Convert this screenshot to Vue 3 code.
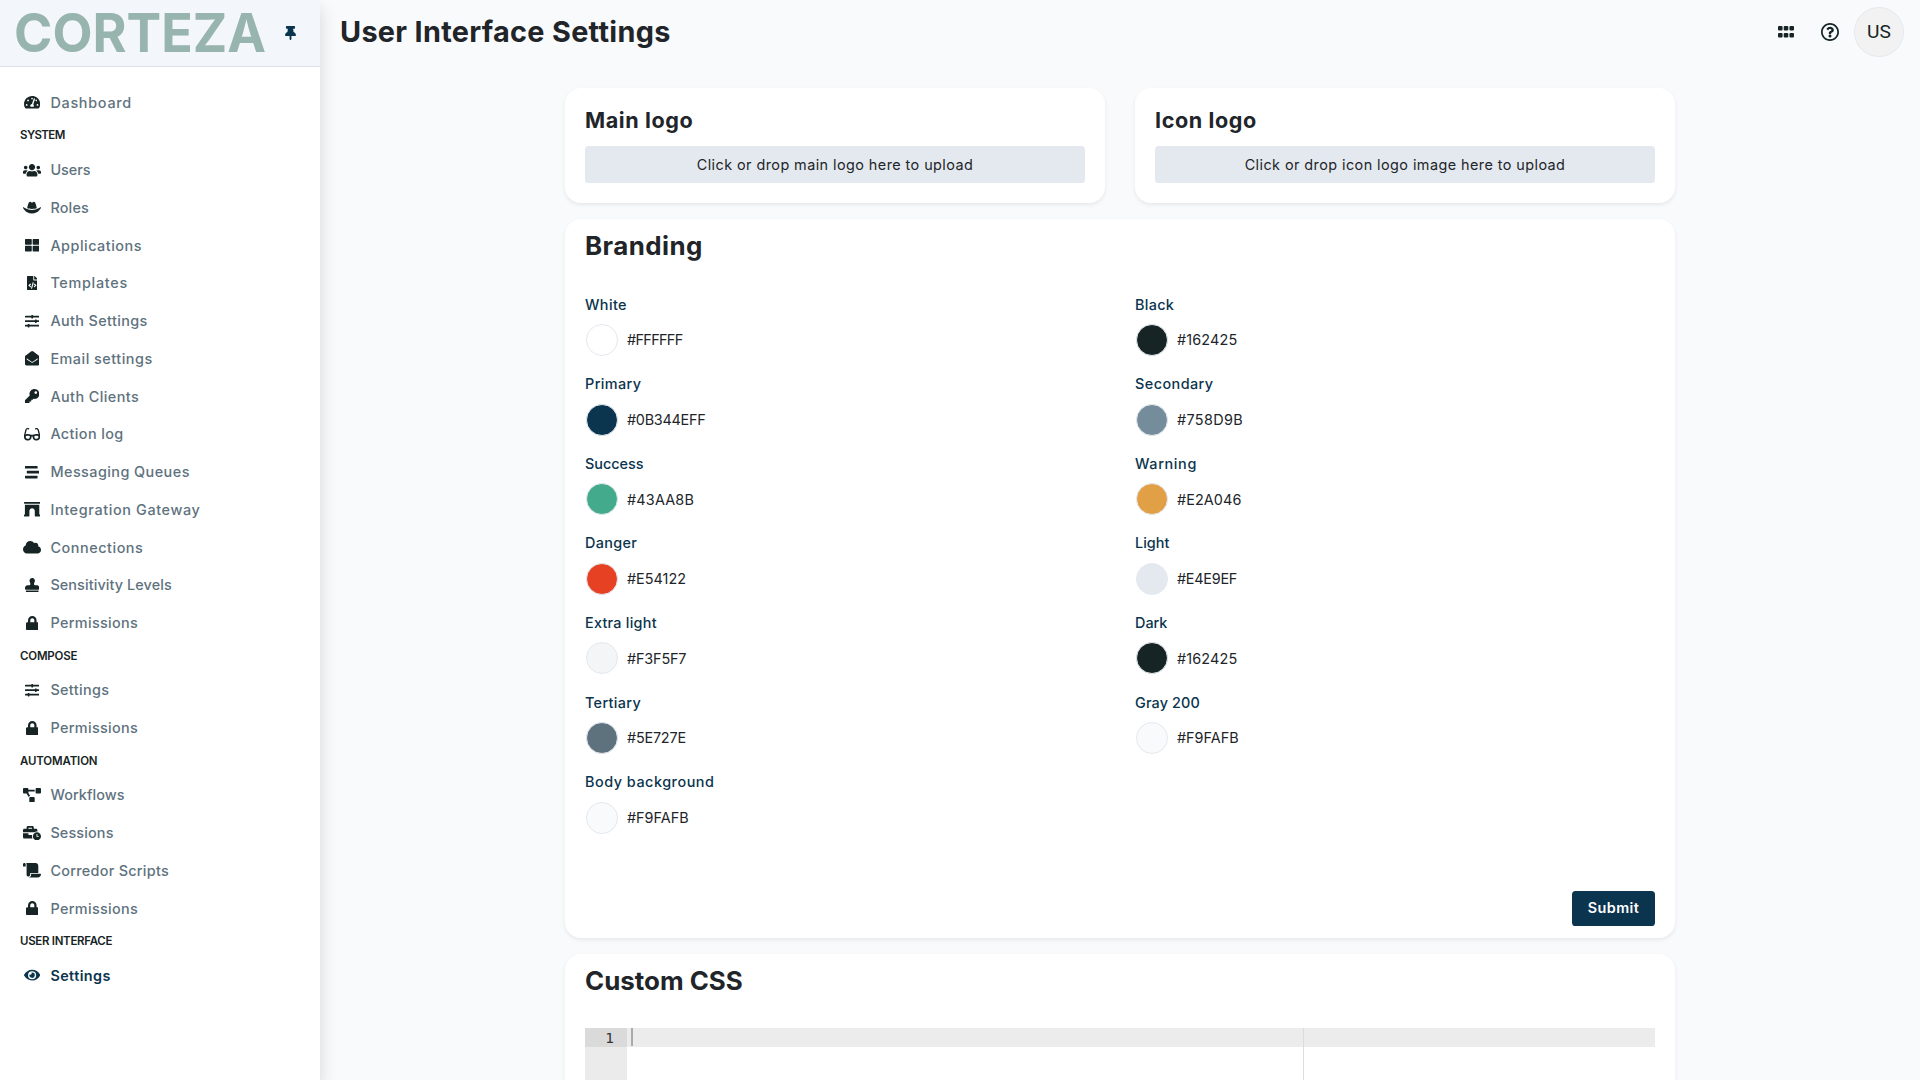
<script setup>
const icons = {
  dashboard: { w: 576, d: 'M288 32C128.94 32 0 160.94 0 320c0 52.8 14.25 102.26 39.06 144.8 5.61 9.62 16.3 15.2 27.44 15.2h443c11.14 0 21.83-5.58 27.44-15.2C561.75 422.26 576 372.8 576 320c0-159.06-128.94-288-288-288zm0 64c14.71 0 26.58 10.13 30.32 23.65-1.11 2.26-2.64 4.23-3.45 6.67l-9.22 27.67c-5.13 3.49-10.97 6.01-17.64 6.01-17.67 0-32-14.33-32-32S270.33 96 288 96zM96 384c-17.67 0-32-14.33-32-32s14.33-32 32-32 32 14.33 32 32-14.33 32-32 32zm48-160c-17.67 0-32-14.33-32-32s14.33-32 32-32 32 14.33 32 32-14.33 32-32 32zm246.77-72.41l-61.33 184C343.13 347.33 352 364.54 352 384c0 11.72-3.38 22.55-8.88 32H232.88c-5.5-9.45-8.88-20.28-8.88-32 0-33.94 26.5-61.43 59.9-63.59l61.34-184.01c4.17-12.56 17.73-19.45 30.36-15.17 12.57 4.19 19.35 17.79 15.17 30.36zm14.66 57.2l15.52-46.55c3.47-1.29 7.13-2.23 11.05-2.23 17.67 0 32 14.33 32 32s-14.33 32-32 32c-11.38-.01-20.89-6.28-26.57-15.22zM480 384c-17.67 0-32-14.33-32-32s14.33-32 32-32 32 14.33 32 32-14.33 32-32 32z' },
  users: { w: 640, d: 'M96 224c35.3 0 64-28.7 64-64s-28.7-64-64-64-64 28.7-64 64 28.7 64 64 64zm448 0c35.3 0 64-28.7 64-64s-28.7-64-64-64-64 28.7-64 64 28.7 64 64 64zm32 32h-64c-17.6 0-33.5 7.1-45.1 18.6 40.3 22.1 68.9 62 75.1 109.4h66c17.7 0 32-14.3 32-32v-32c0-35.3-28.7-64-64-64zm-256 0c61.9 0 112-50.1 112-112S381.9 32 320 32 208 82.1 208 144s50.1 112 112 112zm76.8 32h-8.3c-20.8 10-43.9 16-68.5 16s-47.6-6-68.5-16h-8.3C179.6 288 128 339.6 128 403.2V432c0 26.5 21.5 48 48 48h288c26.5 0 48-21.5 48-48v-28.8c0-63.6-51.6-115.2-115.2-115.2zm-223.7-13.4C161.5 263.1 145.6 256 128 256H64c-35.3 0-64 28.7-64 64v32c0 17.7 14.3 32 32 32h65.9c6.3-47.4 34.9-87.3 75.2-109.4z' },
  hat: { w: 640, d: 'M490 296.9C480.51 239.51 450.51 64 392.3 64c-14 0-26.49 5.93-37 14a58.21 58.21 0 0 1-70.58 0c-10.51-8-23-14-37-14-58.2 0-88.2 175.47-97.71 232.88C188.81 309.47 243.73 320 320 320s131.23-10.51 170-23.1zm142.9-37.18a16 16 0 0 0-19.75 1.5c-1 .9-101.27 90.78-293.16 90.78-190.82 0-292.22-89.94-293.24-90.84A16 16 0 0 0 1 278.53C1.73 280.55 78.32 480 320 480s318.27-199.45 319-201.47a16 16 0 0 0-6.09-18.81z' },
  thLarge: { w: 512, d: 'M296 32h192c13.255 0 24 10.745 24 24v160c0 13.255-10.745 24-24 24H296c-13.255 0-24-10.745-24-24V56c0-13.255 10.745-24 24-24zm-80 0H24C10.745 32 0 42.745 0 56v160c0 13.255 10.745 24 24 24h192c13.255 0 24-10.745 24-24V56c0-13.255-10.745-24-24-24zM0 296v160c0 13.255 10.745 24 24 24h192c13.255 0 24-10.745 24-24V296c0-13.255-10.745-24-24-24H24c-13.255 0-24 10.745-24 24zm296 184h192c13.255 0 24-10.745 24-24V296c0-13.255-10.745-24-24-24H296c-13.255 0-24 10.745-24 24v160c0 13.255 10.745 24 24 24z' },
  fileCode: { w: 384, d: 'M384 121.941V128H256V0h6.059c6.365 0 12.47 2.529 16.971 7.029l97.941 97.941A24.005 24.005 0 0 1 384 121.941zM248 160c-13.2 0-24-10.8-24-24V0H24C10.745 0 0 10.745 0 24v464c0 13.255 10.745 24 24 24h336c13.255 0 24-10.745 24-24V160H248zM123.206 400.505a5.4 5.4 0 0 1-7.633.246l-64.866-60.812a5.4 5.4 0 0 1 0-7.879l64.866-60.812a5.4 5.4 0 0 1 7.633.246l19.579 20.885a5.4 5.4 0 0 1-.372 7.747L101.65 336l40.763 35.874a5.4 5.4 0 0 1 .372 7.747l-19.579 20.884zm51.295 50.479l-27.453-7.97a5.402 5.402 0 0 1-3.681-6.692l61.44-211.626a5.402 5.402 0 0 1 6.692-3.681l27.452 7.97a5.4 5.4 0 0 1 3.68 6.692l-61.44 211.626a5.397 5.397 0 0 1-6.69 3.681zm160.792-111.045l-64.866 60.812a5.4 5.4 0 0 1-7.633-.246l-19.58-20.885a5.4 5.4 0 0 1 .372-7.747L284.35 336l-40.763-35.874a5.4 5.4 0 0 1-.372-7.747l19.58-20.885a5.4 5.4 0 0 1 7.633-.246l64.866 60.812a5.4 5.4 0 0 1-.001 7.879z' },
  sliders: { w: 512, d: 'M496 384H160v-16c0-8.8-7.2-16-16-16h-32c-8.8 0-16 7.2-16 16v16H16c-8.8 0-16 7.2-16 16v32c0 8.8 7.2 16 16 16h80v16c0 8.8 7.2 16 16 16h32c8.8 0 16-7.2 16-16v-16h336c8.8 0 16-7.2 16-16v-32c0-8.8-7.2-16-16-16zm0-160h-80v-16c0-8.8-7.2-16-16-16h-32c-8.8 0-16 7.2-16 16v16H16c-8.8 0-16 7.2-16 16v32c0 8.8 7.2 16 16 16h336v16c0 8.8 7.2 16 16 16h32c8.8 0 16-7.2 16-16v-16h80c8.8 0 16-7.2 16-16v-32c0-8.8-7.2-16-16-16zm0-160H288V48c0-8.8-7.2-16-16-16h-32c-8.8 0-16 7.2-16 16v16H16C7.2 64 0 71.2 0 80v32c0 8.8 7.2 16 16 16h208v16c0 8.8 7.2 16 16 16h32c8.8 0 16-7.2 16-16v-16h208c8.8 0 16-7.2 16-16V80c0-8.8-7.2-16-16-16z' },
  envelope: { w: 512, d: 'M512 464c0 26.51-21.49 48-48 48H48c-26.51 0-48-21.49-48-48V200.724a48 48 0 0 1 18.387-37.776c24.913-19.529 45.501-35.365 164.2-121.511C199.412 29.17 232.797-.347 256 .003c23.198-.354 56.596 29.172 73.413 41.433 118.687 86.137 139.303 101.995 164.2 121.512A48 48 0 0 1 512 200.724V464zm-65.666-196.605c-2.563-3.728-7.7-4.595-11.339-1.907-22.845 16.873-55.462 40.705-105.582 77.079-16.825 12.266-50.21 41.781-73.413 41.43-23.211.344-56.559-29.143-73.413-41.43-50.114-36.37-82.734-60.204-105.582-77.079-3.639-2.688-8.776-1.821-11.339 1.907l-9.072 13.196a7.998 7.998 0 0 0 1.839 10.967c22.887 16.899 55.454 40.69 105.303 76.868 20.274 14.781 56.524 47.813 92.264 47.573 35.724.242 71.961-32.771 92.263-47.573 49.85-36.179 82.418-59.97 105.303-76.868a7.998 7.998 0 0 0 1.839-10.967l-9.071-13.196z' },
  key: { w: 512, d: 'M512 176.001C512 273.203 433.202 352 336 352c-11.22 0-22.19-1.062-32.827-3.069l-24.012 27.014A23.999 23.999 0 0 1 261.223 384H224v40c0 13.255-10.745 24-24 24h-40v40c0 13.255-10.745 24-24 24H24c-13.255 0-24-10.745-24-24v-78.059c0-6.365 2.529-12.47 7.029-16.971l161.802-161.802C163.108 213.814 160 195.271 160 176 160 78.798 238.797.001 335.999 0 433.488-.001 512 78.511 512 176.001zM336 128c0 26.51 21.49 48 48 48s48-21.49 48-48-21.49-48-48-48-48 21.49-48 48z' },
  glasses: { w: 576, d: 'M574.1 280.37L528.75 98.66c-5.91-23.7-21.59-44.05-43-55.81-21.44-11.73-46.97-14.11-70.19-6.33l-15.25 5.08c-8.39 2.79-12.92 11.86-10.12 20.24l5.06 15.18c2.79 8.38 11.85 12.91 20.23 10.12l13.18-4.39c10.87-3.62 23-3.57 33.16 1.73 10.29 5.37 17.57 14.56 20.37 25.82l38.46 153.82c-22.19-6.81-49.79-12.46-81.2-12.46-34.77 0-73.98 7.02-114.85 26.74h-73.18c-40.87-19.74-80.08-26.75-114.86-26.75-31.42 0-59.02 5.65-81.21 12.46l38.46-153.83c2.79-11.25 10.09-20.45 20.38-25.81 10.16-5.3 22.28-5.35 33.15-1.73l13.17 4.39c8.38 2.79 17.44-1.74 20.23-10.12l5.06-15.18c2.8-8.38-1.73-17.45-10.12-20.24l-15.25-5.08c-23.22-7.78-48.75-5.41-70.19 6.33-21.41 11.77-37.09 32.11-43 55.8L1.9 280.37A64.218 64.218 0 0 0 0 295.86v70.25C0 429.01 51.58 480 115.2 480h37.12c60.28 0 110.37-45.94 114.88-105.37l2.93-38.63h35.75l2.93 38.63C313.31 434.06 363.4 480 423.68 480h37.12c63.62 0 115.2-50.99 115.2-113.88v-70.25c0-5.23-.64-10.43-1.9-15.5zm-370.72 89.42c-1.97 25.91-24.4 46.21-51.06 46.21H115.2C86.97 416 64 393.62 64 366.11v-37.54c18.12-6.49 43.42-12.92 72.58-12.92 23.86 0 47.26 4.33 69.93 12.92l-3.13 41.22zM512 366.12c0 27.51-22.97 49.88-51.2 49.88h-37.12c-26.67 0-49.1-20.3-51.06-46.21l-3.13-41.22c22.67-8.59 46.08-12.92 69.95-12.92 29.12 0 54.43 6.44 72.56 12.93v37.54z' },
  stream: { w: 512, d: 'M16 128h416c8.84 0 16-7.16 16-16V48c0-8.84-7.16-16-16-16H16C7.16 32 0 39.16 0 48v64c0 8.84 7.16 16 16 16zm480 80H80c-8.84 0-16 7.16-16 16v64c0 8.84 7.16 16 16 16h416c8.84 0 16-7.16 16-16v-64c0-8.84-7.16-16-16-16zm-64 176H16c-8.84 0-16 7.16-16 16v64c0 8.84 7.16 16 16 16h416c8.84 0 16-7.16 16-16v-64c0-8.84-7.16-16-16-16z' },
  archway: { w: 576, d: 'M560 448h-16V96H32v352H16.02c-8.84 0-16 7.16-16 16v32c0 8.84 7.16 16 16 16H176c8.84 0 16-7.16 16-16V320c0-53.02 42.98-96 96-96s96 42.98 96 96l.02 160v16c0 8.84 7.16 16 16 16H560c8.84 0 16-7.16 16-16v-32c0-8.84-7.16-16-16-16zm0-448H16C7.16 0 0 7.16 0 16v32c0 8.84 7.16 16 16 16h544c8.84 0 16-7.16 16-16V16c0-8.84-7.16-16-16-16z' },
  cloud: { w: 640, d: 'M537.6 226.6c4.1-10.7 6.4-22.4 6.4-34.6 0-53-43-96-96-96-19.7 0-38.1 6-53.3 16.2C367 64.2 315.3 32 256 32c-88.4 0-160 71.6-160 160 0 2.7.1 5.4.2 8.1C40.2 219.8 0 273.2 0 336c0 79.5 64.5 144 144 144h368c70.7 0 128-57.3 128-128 0-61.9-44-113.6-102.4-125.4z' },
  stamp: { w: 512, d: 'M32 512h448v-64H32v64zm384-256h-66.56c-16.26 0-29.44-13.18-29.44-29.44v-9.46c0-27.37 8.88-53.41 21.46-77.72 9.11-17.61 12.9-38.39 9.05-60.42-6.77-38.78-38.47-70.7-77.26-77.45C212.62-9.04 160 37.33 160 96c0 14.16 3.12 27.54 8.69 39.58C182.02 164.43 192 194.7 192 226.49v.07c0 16.26-13.18 29.44-29.44 29.44H96c-53.02 0-96 42.98-96 96v32c0 17.67 14.33 32 32 32h448c17.67 0 32-14.33 32-32v-32c0-53.02-42.98-96-96-96z' },
  lock: { w: 448, d: 'M400 224h-24v-72C376 68.2 307.8 0 224 0S72 68.2 72 152v72H48c-26.5 0-48 21.5-48 48v192c0 26.5 21.5 48 48 48h352c26.5 0 48-21.5 48-48V272c0-26.5-21.5-48-48-48zm-104 0H152v-72c0-39.7 32.3-72 72-72s72 32.3 72 72v72z' },
  diagram: { w: 640, d: 'M384 320H256c-17.67 0-32 14.33-32 32v128c0 17.67 14.33 32 32 32h128c17.67 0 32-14.33 32-32V352c0-17.67-14.33-32-32-32zM192 32c0-17.67-14.33-32-32-32H32C14.33 0 0 14.33 0 32v128c0 17.67 14.33 32 32 32h95.72l73.16 128.04C211.98 300.98 232.4 288 256 288h.28L192 175.51V128h224V64H192V32zM608 0H480c-17.67 0-32 14.33-32 32v128c0 17.67 14.33 32 32 32h128c17.67 0 32-14.33 32-32V32c0-17.67-14.33-32-32-32z' },
  businessTime: { w: 640, d: 'M496 224c-79.59 0-144 64.41-144 144s64.41 144 144 144 144-64.41 144-144-64.41-144-144-144zm64 150.29c0 5.34-4.37 9.71-9.71 9.71h-60.57c-5.34 0-9.71-4.37-9.71-9.71v-76.57c0-5.34 4.37-9.71 9.71-9.71h12.57c5.34 0 9.71 4.37 9.71 9.71V352h38.29c5.34 0 9.71 4.37 9.71 9.71v12.58zM496 192c5.4 0 10.72.33 16 .81V144c0-25.6-22.4-48-48-48h-80V48c0-25.6-22.4-48-48-48H176c-25.6 0-48 22.4-48 48v48H48c-25.6 0-48 22.4-48 48v80h395.12c28.6-20.09 63.35-32 100.88-32zM320 96H192V64h128v32zm6.82 224H208c-8.84 0-16-7.16-16-16v-48H0v144c0 25.6 22.4 48 48 48h291.43C327.1 423.96 320 396.82 320 368c0-16.66 2.48-32.72 6.82-48z' },
  scroll: { w: 640, d: 'M48 0C21.53 0 0 21.53 0 48v64c0 8.84 7.16 16 16 16h80V48C96 21.53 74.47 0 48 0zm208 412.57V352h288V96c0-52.94-43.06-96-96-96H111.59C121.74 13.41 128 29.92 128 48v368c0 38.87 34.65 69.65 74.75 63.12C234.22 474 256 444.46 256 412.57zM288 384v32c0 52.93-43.06 96-96 96h336c61.86 0 112-50.14 112-112 0-8.84-7.16-16-16-16H288z' },
  eye: { w: 576, d: 'M572.52 241.4C518.29 135.59 410.93 64 288 64S57.68 135.64 3.48 241.41a32.35 32.35 0 0 0 0 29.19C57.71 376.41 165.07 448 288 448s230.32-71.64 284.52-177.41a32.35 32.35 0 0 0 0-29.19zM288 400a144 144 0 1 1 144-144 143.93 143.93 0 0 1-144 144zm0-240a95.31 95.31 0 0 0-25.31 3.79 47.85 47.85 0 0 1-66.9 66.9A95.78 95.78 0 1 0 288 160z' },
}

// `track` values are letter spacings in pixels
const groups = [
  { title: '', items: [{ label: 'Dashboard', icon: 'dashboard', track: 0.72 }] },
  {
    title: 'SYSTEM',
    track: -0.6,
    items: [
      { label: 'Users', icon: 'users', track: 0 },
      { label: 'Roles', icon: 'hat', track: 0.2 },
      { label: 'Applications', icon: 'thLarge', track: 0.5 },
      { label: 'Templates', icon: 'fileCode', track: 0.7 },
      { label: 'Auth Settings', icon: 'sliders', track: 0.38 },
      { label: 'Email settings', icon: 'envelope', track: 0.5 },
      { label: 'Auth Clients', icon: 'key', track: 0.42 },
      { label: 'Action log', icon: 'glasses', track: 0.38 },
      { label: 'Messaging Queues', icon: 'stream', track: 0.45 },
      { label: 'Integration Gateway', icon: 'archway', track: 0.63 },
      { label: 'Connections', icon: 'cloud', track: 0.55 },
      { label: 'Sensitivity Levels', icon: 'stamp', track: 0.1 },
      { label: 'Permissions', icon: 'lock', track: 0.35 },
    ],
  },
  {
    title: 'COMPOSE',
    track: -0.2,
    items: [
      { label: 'Settings', icon: 'sliders', track: 0.35 },
      { label: 'Permissions', icon: 'lock', track: 0.35 },
    ],
  },
  {
    title: 'AUTOMATION',
    track: -0.16,
    items: [
      { label: 'Workflows', icon: 'diagram', track: 0.08 },
      { label: 'Sessions', icon: 'businessTime', track: 0.15 },
      { label: 'Corredor Scripts', icon: 'scroll', track: 0.28 },
      { label: 'Permissions', icon: 'lock', track: 0.35 },
    ],
  },
  {
    title: 'USER INTERFACE',
    track: -0.3,
    items: [{ label: 'Settings', icon: 'eye', track: 0.42, active: true }],
  },
]

const uploads = [
  { title: 'Main logo', text: 'Click or drop main logo here to upload' },
  { title: 'Icon logo', text: 'Click or drop icon logo image here to upload' },
]

const colors = [
  { label: 'White', value: '#FFFFFF', track: 0.4, valueTrack: -0.65 },
  { label: 'Black', value: '#162425', track: 0.3, valueTrack: 0.15 },
  { label: 'Primary', value: '#0B344EFF', track: 0.4, valueTrack: -0.25 },
  { label: 'Secondary', value: '#758D9B', track: 0.45, valueTrack: 0.35 },
  { label: 'Success', value: '#43AA8B', track: 0, valueTrack: 0.2 },
  { label: 'Warning', value: '#E2A046', track: 0.65, valueTrack: 0.1 },
  { label: 'Danger', value: '#E54122', track: 0.35, valueTrack: 0 },
  { label: 'Light', value: '#E4E9EF', track: 0.05, valueTrack: -0.25 },
  { label: 'Extra light', value: '#F3F5F7', track: 0.25, valueTrack: -0.15 },
  { label: 'Dark', value: '#162425', track: 0, valueTrack: 0.15 },
  { label: 'Tertiary', value: '#5E727E', track: 0.35, valueTrack: -0.2 },
  { label: 'Gray 200', value: '#F9FAFB', track: 0.15, valueTrack: 0 },
  { label: 'Body background', value: '#F9FAFB', track: 0.52, valueTrack: 0 },
]

const tracking = (px) => ({ letterSpacing: `${px}px` })
</script>

<template>
  <div class="app">
    <aside class="sidebar">
      <header class="brand">
        <svg class="logo" width="254" height="66" viewBox="0 0 254 66">
          <text x="-1" y="52.4" textLength="252" lengthAdjust="spacingAndGlyphs">CORTEZA</text>
        </svg>
        <svg class="pin" viewBox="0 0 384 512"><path d="M298.028 214.267L285.793 96H328c13.255 0 24-10.745 24-24V24c0-13.255-10.745-24-24-24H56C42.745 0 32 10.745 32 24v48c0 13.255 10.745 24 24 24h42.207L85.972 214.267C37.465 236.82 0 277.261 0 328c0 13.255 10.745 24 24 24h136v104.007c0 1.242.289 2.467.845 3.578l24 48c2.941 5.882 11.364 5.893 14.311 0l24-48a8.008 8.008 0 0 0 .845-3.578V352h136c13.255 0 24-10.745 24-24-.001-51.183-37.983-91.42-85.973-113.733z" /></svg>
      </header>
      <nav class="nav">
        <section v-for="group in groups" :key="group.title">
          <h6 v-if="group.title" class="group-title" :style="tracking(group.track)">{{ group.title }}</h6>
          <a v-for="item in group.items" :key="item.label" class="nav-item" :class="{ active: item.active }">
            <span class="nav-icon">
              <svg :viewBox="`0 0 ${icons[item.icon].w} 512`"><path :d="icons[item.icon].d" /></svg>
            </span>
            <span class="nav-label" :style="tracking(item.track)">{{ item.label }}</span>
          </a>
        </section>
      </nav>
    </aside>

    <div class="main">
      <header class="topbar">
        <h1 class="page-title">User Interface Settings</h1>
        <div class="tools">
          <svg class="grip" viewBox="0 96 448 320">
            <rect v-for="n in 6" :key="n" :x="((n - 1) % 3) * 160" :y="n > 3 ? 288 : 96" width="128" height="128" rx="30" />
          </svg>
          <svg class="help" viewBox="8 8 496 496"><path d="M256 8C119.043 8 8 119.083 8 256c0 136.997 111.043 248 248 248s248-111.003 248-248C504 119.083 392.957 8 256 8zm0 448c-110.532 0-200-89.431-200-200 0-110.495 89.472-200 200-200 110.491 0 200 89.471 200 200 0 110.53-89.431 200-200 200zm107.244-255.2c0 67.052-72.421 68.084-72.421 92.863V300c0 6.627-5.373 12-12 12h-45.647c-6.627 0-12-5.373-12-12v-8.659c0-35.745 27.1-50.034 47.579-61.516 17.561-9.845 28.324-16.541 28.324-29.579 0-17.246-21.999-28.693-39.784-28.693-23.189 0-33.894 10.977-48.942 29.969-4.057 5.12-11.46 6.071-16.666 2.124l-27.824-21.098c-5.107-3.872-6.251-11.066-2.644-16.363C184.846 131.491 214.94 112 261.794 112c49.071 0 101.45 38.304 101.45 88.8zM298 368c0 23.159-18.841 42-42 42s-42-18.841-42-42 18.841-42 42-42 42 18.841 42 42z" /></svg>
          <div class="avatar">US</div>
        </div>
      </header>

      <main class="content">
        <div class="uploads">
          <section v-for="upload in uploads" :key="upload.title" class="card upload-card">
            <h4 class="upload-title">{{ upload.title }}</h4>
            <div class="dropzone">{{ upload.text }}</div>
          </section>
        </div>

        <section class="card branding">
          <h3 class="card-title">Branding</h3>
          <div class="colors">
            <div v-for="color in colors" :key="color.label" class="color">
              <label class="color-label" :style="tracking(color.track)">{{ color.label }}</label>
              <div class="color-row">
                <span class="swatch" :style="{ backgroundColor: color.value }"></span>
                <span class="color-value" :style="tracking(color.valueTrack)">{{ color.value }}</span>
              </div>
            </div>
          </div>
          <div class="actions"><button class="submit">Submit</button></div>
        </section>

        <section class="card css-card">
          <h3 class="card-title css-title">Custom CSS</h3>
          <div class="editor">
            <div class="gutter"><div class="line-number">1</div></div>
            <div class="code">
              <div class="active-line"><span class="cursor"></span></div>
              <span class="print-margin"></span>
            </div>
          </div>
        </section>
      </main>
    </div>
  </div>
</template>

<style>
html,
body {
  margin: 0;
  height: 100%;
  overflow: hidden;
}
</style>

<style scoped>
* {
  box-sizing: border-box;
}
.app {
  display: flex;
  width: 1920px;
  height: 1080px;
  overflow: hidden;
  background: #f9fafb;
  color: #212529;
  font-family: Inter, 'Open Sans', sans-serif;
  font-size: 14.4px;
}
h1, h3, h4, h6 {
  margin: 0;
  font-weight: 700;
}
svg {
  display: block;
  fill: currentColor;
}

/* Sidebar */
.sidebar {
  position: relative;
  z-index: 1;
  flex: none;
  width: 320px;
  height: 1080px;
  background: #fff;
  box-shadow: 0 8px 16px rgba(0, 0, 0, 0.15);
}
.brand {
  display: flex;
  align-items: center;
  height: 67px;
  padding-left: 15px;
  background: #f3f6fa;
  border-bottom: 1px solid #dee2e6;
}
.logo {
  overflow: visible;
  fill: #97b4ae;
  font-size: 54px;
  font-weight: 700;
}
.pin {
  width: 11px;
  height: 14.6px;
  margin-left: 16px;
  color: #0b344e;
}
.nav {
  padding-top: 16.6px;
}
.group-title {
  height: 29.5px;
  padding-left: 20px;
  color: #162425;
  font-size: 11.5px;
  font-weight: 600;
  line-height: 28px;
}
.nav-item {
  display: flex;
  align-items: center;
  height: 37.75px;
  padding-left: 20px;
  color: #5e727e;
  font-weight: 500;
}
.nav-icon {
  display: flex;
  justify-content: center;
  width: 24px;
  margin-right: 6.4px;
  color: #162425;
}
.nav-icon svg {
  height: 14.4px;
}
.nav-item.active,
.nav-item.active .nav-icon {
  color: #0b344e;
  font-weight: 600;
}

/* Top bar */
.main {
  flex: 1;
  min-width: 0;
}
.topbar {
  display: flex;
  align-items: center;
  justify-content: space-between;
  height: 64px;
  padding: 0 16px 0 20px;
}
.page-title {
  padding-bottom: 1px;
  font-size: 28.8px;
  letter-spacing: 0.32px;
}
.tools {
  display: flex;
  align-items: center;
  color: #162425;
}
.grip {
  width: 16px;
  height: 11.5px;
  margin-right: 27px;
}
.help {
  width: 18px;
  height: 18px;
  margin-right: 15px;
}
.avatar {
  width: 50px;
  height: 50px;
  border: 1px solid #e4e9ef;
  border-radius: 50%;
  background: #f2f2f2;
  font: 19.2px/48px Roboto, sans-serif;
  text-align: center;
}

/* Cards */
.content {
  width: 1110px;
  margin: 24px 0 0 245px;
}
.card {
  background: #fff;
  border-radius: 16px;
  box-shadow: 0 2px 4px rgba(0, 0, 0, 0.075);
}
.uploads {
  display: flex;
  gap: 30px;
}
.upload-card {
  flex: 1;
  padding: 20px;
}
.upload-title {
  margin-bottom: 13px;
  font-size: 21.6px;
  letter-spacing: 0.58px;
  line-height: 25px;
}
.dropzone {
  height: 37px;
  border-radius: 3.6px;
  background: #e4e9ef;
  letter-spacing: 0.44px;
  line-height: 37px;
  text-align: center;
}
.branding {
  height: 719px;
  margin-top: 16px;
  padding: 12px 20px;
}
.card-title {
  font-size: 25.9px;
  letter-spacing: 0.45px;
  line-height: 30px;
}
.css-title {
  letter-spacing: 0;
}
.colors {
  display: grid;
  grid-template-columns: 1fr 1fr;
  grid-auto-rows: 79.6px;
  column-gap: 30px;
  margin-top: 32.6px;
  margin-bottom: 0.4px;
}
.color-label {
  display: block;
  color: #0b344e;
  font-weight: 500;
  line-height: 22px;
}
.color-row {
  display: flex;
  align-items: center;
  margin-top: 8.4px;
  padding-left: 1px;
}
.swatch {
  width: 32px;
  height: 32px;
  margin-right: 9px;
  border: 1px solid #e4e9ef;
  border-radius: 50%;
}
.actions {
  display: flex;
  justify-content: flex-end;
  margin-top: 40px;
}
.submit {
  width: 83px;
  height: 35px;
  padding: 0 0 1px;
  border: 0;
  border-radius: 3.6px;
  background: #0b344e;
  color: #fff;
  font: 600 14.4px Inter, sans-serif;
  letter-spacing: 0.4px;
}

/* Code editor */
.css-card {
  margin-top: 16px;
  padding: 12px 20px;
}
.editor {
  display: flex;
  height: 300px;
  margin-top: 32px;
}
.gutter {
  width: 42px;
  background: #ebebeb;
}
.line-number {
  height: 18.5px;
  padding-right: 13px;
  background: #dadada;
  color: #333;
  font: 14.4px/20px 'DejaVu Sans Mono', monospace;
  text-align: right;
}
.code {
  position: relative;
  flex: 1;
}
.active-line {
  height: 18.5px;
  padding-left: 4px;
  background: #ececec;
}
.cursor {
  display: block;
  width: 2px;
  height: 18px;
  background: #aaa;
}
.print-margin {
  position: absolute;
  top: 0;
  left: 676px;
  width: 1px;
  height: 100%;
  background: #dcdcdc;
}
</style>
